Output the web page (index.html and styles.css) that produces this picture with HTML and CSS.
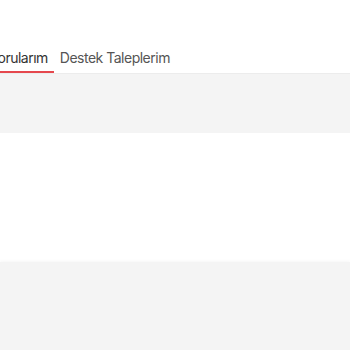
FILE: index.html
```html
<!DOCTYPE html>
<html lang="tr">
<head>
<meta charset="utf-8">
<link rel="stylesheet" href="styles.css">
</head>
<body>
<div class="header">
  <nav class="tabs">
    <a class="tab active">Sorularım</a>
    <a class="tab">Destek Taleplerim</a>
  </nav>
</div>
<section class="band"></section>
<section class="panel"></section>
<section class="band bottom"></section>
</body>
</html>
```

FILE: styles.css
```css
* { box-sizing: border-box; }
html, body { margin: 0; padding: 0; }
body {
  width: 350px;
  height: 350px;
  overflow: hidden;
  background: #fff;
  font-family: Inter, "Noto Sans", sans-serif;
  display: flex;
  flex-direction: column;
}
.header {
  height: 74px;
  display: flex;
  align-items: flex-end;
  border-bottom: 1px solid #ececec;
  background: #fff;
}
.tabs {
  display: flex;
  margin-left: -17px;
}
.tab {
  font-size: 14px;
  letter-spacing: -0.5px;
  line-height: 20px;
  padding: 0 6px 3px 6px;
  color: #555;
  border-bottom: 2px solid transparent;
  white-space: nowrap;
}
.tab.active {
  color: #333;
  border-bottom-color: #e5484d;
}
.band {
  height: 59px;
  background: #f4f4f4;
  box-shadow: 0 1px 2px rgba(0,0,0,0.04);
}
.panel {
  height: 129px;
  background: #fff;
}
.band.bottom {
  flex: 1;
  box-shadow: 0 -1px 3px rgba(0,0,0,0.04);
}
```
